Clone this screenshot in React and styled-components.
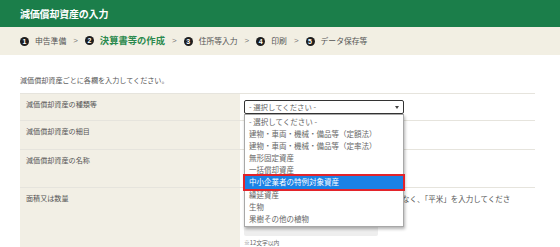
import React from 'react';
import styled, { createGlobalStyle } from 'styled-components';

const Global = createGlobalStyle`
  html, body { margin: 0; padding: 0; background: #fff; }
  body {
    font-family: "Noto Sans CJK JP", "Noto Sans", sans-serif;
    color: #555;
    overflow: hidden;
  }
  * { box-sizing: border-box; }
`;

const Header = styled.header`
  height: 27px;
  background: #1b7e4a;
  color: #fff;
  display: flex;
  align-items: center;
  padding-left: 20px;
  font-size: 10px;
  font-weight: 700;
  letter-spacing: -0.2px;
`;

const StepBar = styled.nav`
  height: 28px;
  background: #f2efe3;
  display: flex;
  align-items: center;
  padding-left: 20px;
  gap: 7px;
`;

const Step = styled.div`
  display: flex;
  align-items: center;
  gap: 6px;
  font-size: ${p => (p.$active ? '9.3px' : '7.8px')};
  font-weight: ${p => (p.$active ? 700 : 400)};
  color: ${p => (p.$active ? '#2b8a4e' : '#555')};
  line-height: 1;
`;

const Num = styled.span`
  width: 9px;
  height: 9px;
  border-radius: 50%;
  background: #1e1e1e;
  color: #fff;
  font-family: "Liberation Sans", Arial, sans-serif;
  font-size: 7px;
  font-weight: 700;
  display: inline-flex;
  align-items: center;
  justify-content: center;
`;

const Chevron = styled.span`
  font-family: "Liberation Sans", Arial, sans-serif;
  font-size: 8px;
  color: #777;
  line-height: 1;
`;

const Main = styled.main`
  padding: 0 25px 0 20px;
`;

const Lead = styled.p`
  margin: 21px 0 8px;
  font-size: 7.1px;
  line-height: 9px;
`;

const Table = styled.div`
  width: 515px;
  border-top: 1px solid #e6e4dd;
`;

const Row = styled.div`
  display: grid;
  grid-template-columns: 220px 1fr;
  min-height: ${p => p.$h}px;
  border-bottom: 1px solid #e6e4dd;
`;

const Label = styled.div`
  background: #f2efe5;
  padding: 6px 6px;
  font-size: 7.1px;
  line-height: 9px;
`;

const Value = styled.div`
  position: relative;
  padding: 6px 4px;
  font-size: 7.5px;
  line-height: 10px;
`;

const SelectWrap = styled.div`
  position: relative;
  width: 160px;
`;

const SelectBox = styled.div`
  height: 14px;
  border: 1.5px solid #333;
  border-radius: 2px;
  display: flex;
  align-items: center;
  justify-content: space-between;
  padding: 0 4px;
  font-size: 7.4px;
  color: #666;
  background: #fff;
`;

const Arrow = styled.span`
  width: 0;
  height: 0;
  border-left: 2.5px solid transparent;
  border-right: 2.5px solid transparent;
  border-top: 3px solid #444;
`;

const List = styled.ul`
  position: absolute;
  top: 100%;
  left: 0;
  width: 160px;
  margin: 0;
  padding: 1px 0;
  list-style: none;
  background: #fff;
  border: 1px solid #a8a8a8;
  box-shadow: 1px 2px 3px rgba(0, 0, 0, 0.3);
  z-index: 10;
`;

const Item = styled.li`
  height: 12.1px;
  line-height: 12px;
  padding-left: 4px;
  font-size: 7.5px;
  color: ${p => (p.$selected ? '#fff' : '#666')};
  background: ${p => (p.$selected ? '#1b82e6' : 'transparent')};
  outline: ${p => (p.$selected ? '2px solid #e3242b' : 'none')};
  position: relative;
  white-space: nowrap;
`;

const Input = styled.div`
  width: 134px;
  height: 20px;
  margin-top: 2px;
  background: #eeeeee;
  border-radius: 2px;
`;

const Note = styled.div`
  margin-top: 3px;
  font-size: 5.8px;
  line-height: 8px;
  color: #666;
`;

const Help = styled.p`
  margin: 0;
  width: 276px;
`;

const steps = [
  { n: '1', t: '申告準備' },
  { n: '2', t: '決算書等の作成', active: true },
  { n: '3', t: '住所等入力' },
  { n: '4', t: '印刷' },
  { n: '5', t: 'データ保存等' },
];

const options = [
  '- 選択してください -',
  '建物・車両・機械・備品等（定額法）',
  '建物・車両・機械・備品等（定率法）',
  '無形固定資産',
  '一括償却資産',
  '中小企業者の特例対象資産',
  '繰延資産',
  '生物',
  '果樹その他の植物',
];

export default function App() {
  return (
    <>
      <Global />
      <Header>減価償却資産の入力</Header>
      <StepBar>
        {steps.map((s, i) => (
          <React.Fragment key={s.n}>
            {i > 0 && <Chevron>&gt;</Chevron>}
            <Step $active={s.active}>
              <Num>{s.n}</Num>
              {s.t}
            </Step>
          </React.Fragment>
        ))}
      </StepBar>
      <Main>
        <Lead>減価償却資産ごとに各欄を入力してください。</Lead>
        <Table>
          <Row $h={27}>
            <Label>減価償却資産の種類等</Label>
            <Value>
              <SelectWrap>
                <SelectBox>
                  <span>- 選択してください -</span>
                  <Arrow />
                </SelectBox>
                <List>
                  {options.map((o, i) => (
                    <Item key={o} $selected={i === 5}>{o}</Item>
                  ))}
                </List>
              </SelectWrap>
            </Value>
          </Row>
          <Row $h={29}>
            <Label>減価償却資産の細目</Label>
            <Value />
          </Row>
          <Row $h={38}>
            <Label>減価償却資産の名称</Label>
            <Value />
          </Row>
          <Row $h={70}>
            <Label>面積又は数量</Label>
            <Value>
              <Help>面積の単位は、「㎡」や「ｍ2」などの記号ではなく、「平米」を入力してください。</Help>
              <Input />
              <Note>※12文字以内</Note>
            </Value>
          </Row>
        </Table>
      </Main>
    </>
  );
}
